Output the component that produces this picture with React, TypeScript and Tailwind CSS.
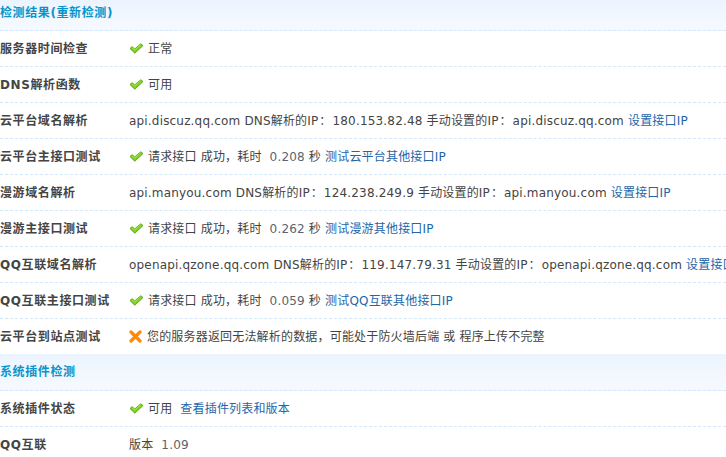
import * as React from "react";

// Discuz 云平台诊断工具 — 检测结果表

function Check() {
  return (
    <svg width="15" height="11" viewBox="0 0 15 11" className="shrink-0">
      <path
        d="M1 5.5 L3.2 3.6 L5.6 6 L11.8 0.8 L14 2.6 L5.8 10.2 Z"
        fill="#7fd11f"
        stroke="#55a312"
        strokeWidth="0.9"
        strokeLinejoin="round"
      />
      <path d="M3.2 4.6 L5.6 7 L11.8 1.8" fill="none" stroke="#b4ec5c" strokeWidth="0.8" />
    </svg>
  );
}

function Cross() {
  return (
    <svg width="13" height="13" viewBox="0 0 13 13" className="shrink-0">
      <path d="M2 2 L11 11 M11 2 L2 11" stroke="#ff8a00" strokeWidth="3.2" strokeLinecap="round" />
    </svg>
  );
}

const LINK = "text-[#2366a8]";
const NUM = "text-[#5a6470]";

// full-width colon, kept at a full em like the original page
function Colon() {
  return <span className="inline-block w-[14px] text-center">：</span>;
}

function Header({ children, first }: { children: React.ReactNode; first?: boolean }) {
  return (
    <div
      className={
        "flex items-center border-b border-dashed border-[#d3e8fa] bg-gradient-to-b from-[#ebf4fe] to-[#f6faff] " +
        (first ? "h-[31px] pb-[4px]" : "h-[37px]")
      }
    >
      <h3 className="text-[12px] font-bold tracking-[0.6px] text-[#0a93c9]">{children}</h3>
    </div>
  );
}

function Row({
  label,
  children,
  last,
}: {
  label: string;
  children: React.ReactNode;
  last?: boolean;
}) {
  return (
    <div
      className={
        "flex items-center whitespace-nowrap " +
        (last ? "h-[35px]" : "h-[36px] border-b border-dashed border-[#d3e8fa]")
      }
    >
      <div className="w-[129px] shrink-0 text-[12px] font-bold tracking-[0.6px] text-[#444]">{label}</div>
      <div className="flex items-center text-[12px] tracking-[0.18px] text-[#444]">{children}</div>
    </div>
  );
}

function Ok({ children }: { children: React.ReactNode }) {
  return (
    <>
      <Check />
      <span className="ml-[4px]">{children}</span>
    </>
  );
}

function Timing({ ms, link }: { ms: string; link: string }) {
  return (
    <Ok>
      请求接口 成功，耗时 &nbsp;<span className={NUM}>{ms}</span> 秒 <span className={LINK}>{link}</span>
    </Ok>
  );
}

function Dns({ host, ip }: { host: string; ip: string }) {
  return (
    <span>
      {host} DNS解析的IP<Colon />{ip} 手动设置的IP<Colon />{host} <span className={LINK}>设置接口IP</span>
    </span>
  );
}

export default function App() {
  return (
    <div
      className="h-[457px] w-[726px] overflow-hidden bg-white"
      style={{ fontFamily: '"DejaVu Sans", Verdana, "Noto Sans CJK SC", sans-serif' }}
    >
      <Header first>检测结果(重新检测)</Header>
      <Row label="服务器时间检查">
        <Ok>正常</Ok>
      </Row>
      <Row label="DNS解析函数">
        <Ok>可用</Ok>
      </Row>
      <Row label="云平台域名解析">
        <Dns host="api.discuz.qq.com" ip="180.153.82.48" />
      </Row>
      <Row label="云平台主接口测试">
        <Timing ms="0.208" link="测试云平台其他接口IP" />
      </Row>
      <Row label="漫游域名解析">
        <Dns host="api.manyou.com" ip="124.238.249.9" />
      </Row>
      <Row label="漫游主接口测试">
        <Timing ms="0.262" link="测试漫游其他接口IP" />
      </Row>
      <Row label="QQ互联域名解析">
        <Dns host="openapi.qzone.qq.com" ip="119.147.79.31" />
      </Row>
      <Row label="QQ互联主接口测试">
        <Timing ms="0.059" link="测试QQ互联其他接口IP" />
      </Row>
      <Row label="云平台到站点测试" last>
        <Cross />
        <span className="ml-[5px]">您的服务器返回无法解析的数据，可能处于防火墙后端 或 程序上传不完整</span>
      </Row>
      <Header>系统插件检测</Header>
      <Row label="系统插件状态">
        <Ok>
          可用 &nbsp;<span className={LINK}>查看插件列表和版本</span>
        </Ok>
      </Row>
      <Row label="QQ互联" last>
        <span>
          版本 &nbsp;<span className={NUM}>1.09</span>
        </span>
      </Row>
    </div>
  );
}
